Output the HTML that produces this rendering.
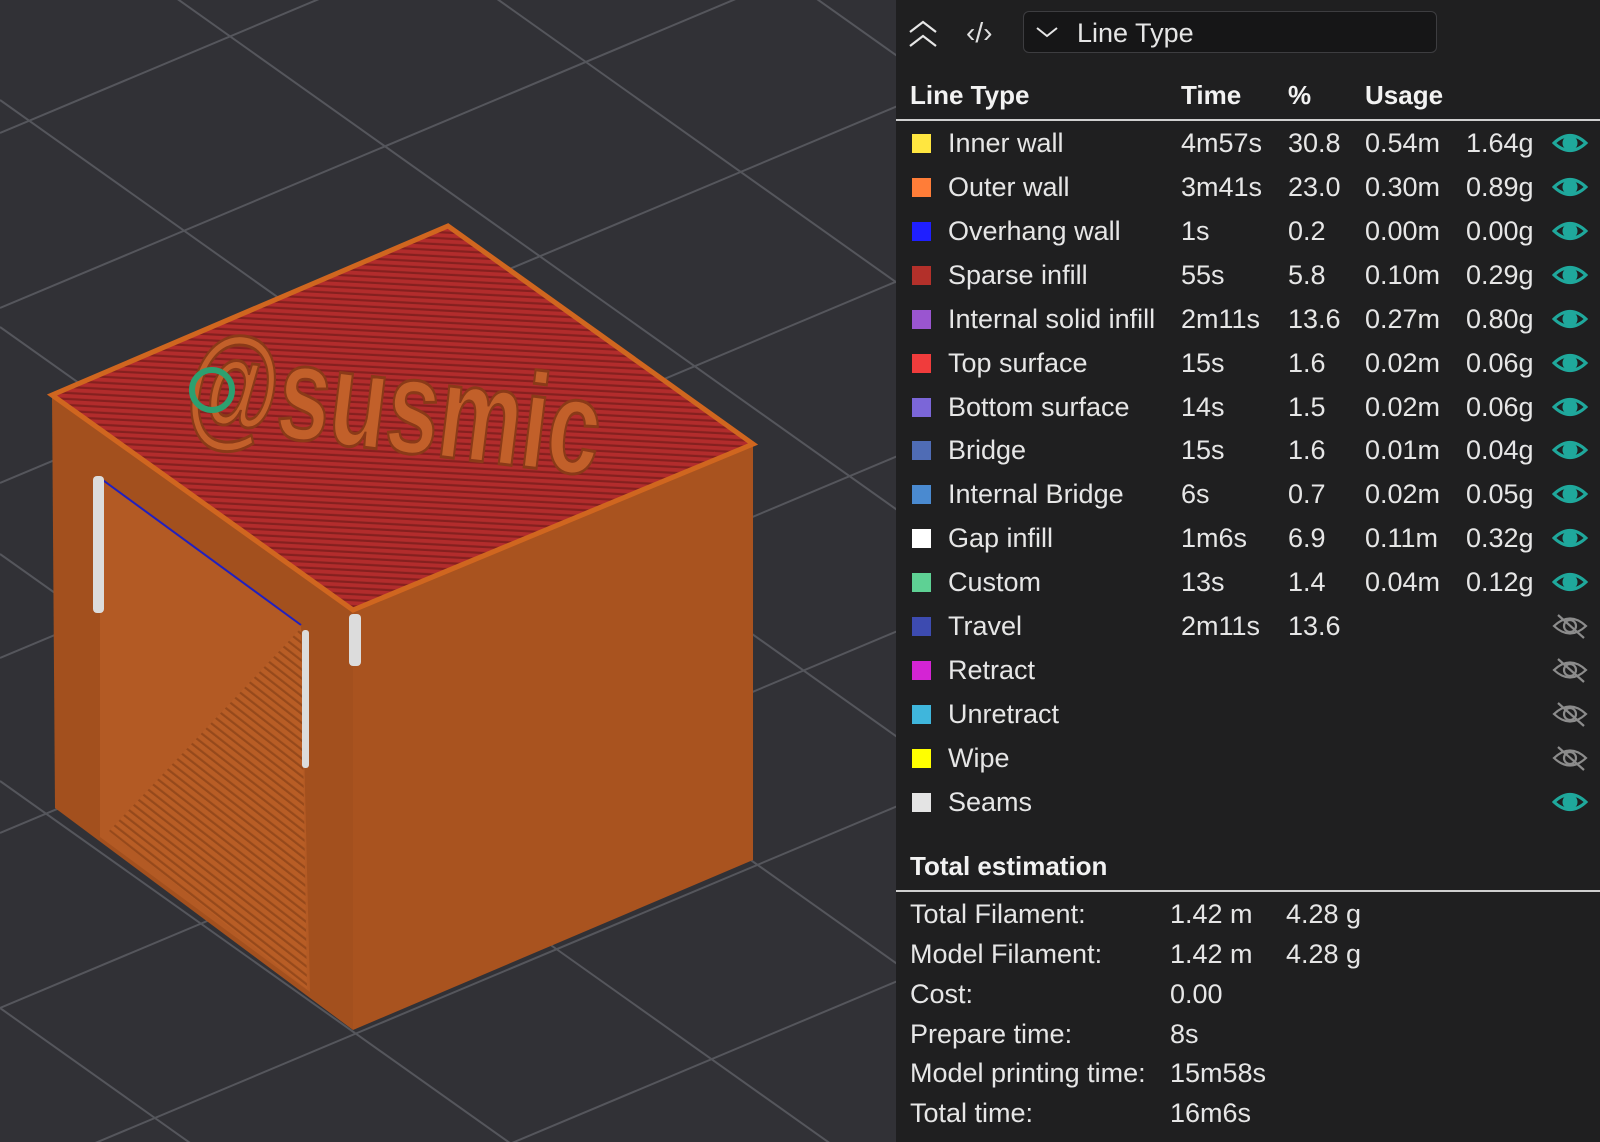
<!DOCTYPE html>
<html style="overflow:hidden"><head><meta charset="utf-8">
<style>
*{margin:0;padding:0;box-sizing:border-box}
html,body{width:1600px;height:1142px;overflow:hidden}
body{background:#313136;font-family:"Liberation Sans",sans-serif;position:relative}
#vp{position:absolute;left:0;top:0}
#panel{position:absolute;left:896px;top:0;width:704px;height:1142px;background:#1f1f20;color:#e6e6e6;overflow:hidden}
.t{position:absolute;font-size:27px;line-height:44px;white-space:nowrap}
.h{position:absolute;font-size:26px;font-weight:bold;line-height:44px;white-space:nowrap;color:#f2f2f2}
.sw{position:absolute;width:19px;height:19px}
</style></head><body>
<svg id="vp" width="896" height="1142" viewBox="0 0 896 1142">
<defs>
<pattern id="redstripe" width="8" height="6" patternUnits="userSpaceOnUse" patternTransform="rotate(3)">
<rect width="8" height="6" fill="#b22c2c"/><rect y="3.8" width="8" height="2.2" fill="#85201f"/></pattern>
<pattern id="orstripe" width="8" height="7" patternUnits="userSpaceOnUse" patternTransform="rotate(38)">
<rect width="8" height="7" fill="#b85d25"/><rect y="4.8" width="8" height="2.2" fill="#96491b"/></pattern>
</defs>
<rect width="896" height="1142" fill="#313136"/>
<g stroke="#55565c" stroke-width="2">
<line x1="0" y1="-808" x2="1200" y2="44"/>
<line x1="0" y1="-581" x2="1200" y2="271"/>
<line x1="0" y1="-354" x2="1200" y2="498"/>
<line x1="0" y1="-127" x2="1200" y2="725"/>
<line x1="0" y1="100" x2="1200" y2="952"/>
<line x1="0" y1="327" x2="1200" y2="1179"/>
<line x1="0" y1="554" x2="1200" y2="1406"/>
<line x1="0" y1="781" x2="1200" y2="1633"/>
<line x1="0" y1="1008" x2="1200" y2="1860"/>
<line x1="0" y1="133" x2="1200" y2="-371"/>
<line x1="0" y1="308" x2="1200" y2="-196"/>
<line x1="0" y1="483" x2="1200" y2="-21"/>
<line x1="0" y1="658" x2="1200" y2="154"/>
<line x1="0" y1="833" x2="1200" y2="329"/>
<line x1="0" y1="1008" x2="1200" y2="504"/>
<line x1="0" y1="1183" x2="1200" y2="679"/>
<line x1="0" y1="1358" x2="1200" y2="854"/>
<line x1="0" y1="1533" x2="1200" y2="1029"/>
</g>
<polygon points="353,610 753,444 753,860 353,1030" fill="#a9531f"/>
<polygon points="52,395 353,610 353,1030 55,808" fill="#a3501e"/>
<polygon points="100,478 301,625 310,992 100,837" fill="#b35a24"/>
<polygon points="109,831 301,628 307,989" fill="url(#orstripe)"/>
<line x1="100" y1="478" x2="301" y2="625" stroke="#2020c0" stroke-width="2"/>
<polygon points="448,226 753,444 353,610 52,395" fill="url(#redstripe)" stroke="#d0661f" stroke-width="5"/>
<g transform="translate(183,425) rotate(7)">
<text x="0" y="0" font-family="Liberation Sans, sans-serif" font-weight="bold" font-size="135" textLength="415" lengthAdjust="spacingAndGlyphs" fill="#c2602a" stroke="#8a3a18" stroke-width="3">@susmic</text>
</g>
<circle cx="212" cy="390" r="20" fill="none" stroke="#2da070" stroke-width="6"/>
<rect x="93" y="476" width="11" height="137" rx="4" fill="#dcdcdc"/>
<rect x="302" y="630" width="7" height="138" rx="3" fill="#dcdcdc"/>
<rect x="349" y="614" width="12" height="52" rx="4" fill="#dcdcdc"/>
</svg>

<div id="panel">
<svg style="position:absolute;left:12px;top:19px" width="30" height="30" viewBox="0 0 30 30" fill="none" stroke="#e6e6e6" stroke-width="2.2"><path d="M2 13 L15 3 L28 13"/><path d="M2 27 L15 17 L28 27"/></svg>
<div class="t" style="left:70px;top:11px;font-size:28px;color:#e0e0e0">‹/›</div>
<div style="position:absolute;left:127px;top:11px;width:414px;height:42px;border:1.5px solid #3d3d40;border-radius:6px;background:#161617"></div>
<svg style="position:absolute;left:140px;top:26px" width="22" height="12" viewBox="0 0 22 12" fill="none" stroke="#e6e6e6" stroke-width="2"><path d="M1 2 L11 10 L21 2"/></svg>
<div class="t" style="left:181px;top:11px">Line Type</div>
<div class="h" style="left:14px;top:73px">Line Type</div>
<div class="h" style="left:285px;top:73px">Time</div>
<div class="h" style="left:392px;top:73px">%</div>
<div class="h" style="left:469px;top:73px">Usage</div>
<div style="position:absolute;left:0;top:119px;width:704px;height:2px;background:#cfcfcf"></div>

<div class="h" style="left:14px;top:844px">Total estimation</div>
<div style="position:absolute;left:0;top:890px;width:704px;height:2px;background:#cfcfcf"></div>
<div class="t" style="left:14px;top:892px">Total Filament:</div><div class="t" style="left:274px;top:892px">1.42 m</div><div class="t" style="left:390px;top:892px">4.28 g</div>
<div class="t" style="left:14px;top:932px">Model Filament:</div><div class="t" style="left:274px;top:932px">1.42 m</div><div class="t" style="left:390px;top:932px">4.28 g</div>
<div class="t" style="left:14px;top:972px">Cost:</div><div class="t" style="left:274px;top:972px">0.00</div>
<div class="t" style="left:14px;top:1012px">Prepare time:</div><div class="t" style="left:274px;top:1012px">8s</div>
<div class="t" style="left:14px;top:1051px">Model printing time:</div><div class="t" style="left:274px;top:1051px">15m58s</div>
<div class="t" style="left:14px;top:1091px;line-height:44px">Total time:</div><div class="t" style="left:274px;top:1091px">16m6s</div>

<div class="sw" style="left:16px;top:134px;background:#ffe640"></div><div class="t" style="left:52px;top:121px">Inner wall</div><div class="t" style="left:285px;top:121px">4m57s</div><div class="t" style="left:392px;top:121px">30.8</div><div class="t" style="left:469px;top:121px">0.54m</div><div class="t" style="left:570px;top:121px">1.64g</div>
<div class="sw" style="left:16px;top:178px;background:#ff7d38"></div><div class="t" style="left:52px;top:165px">Outer wall</div><div class="t" style="left:285px;top:165px">3m41s</div><div class="t" style="left:392px;top:165px">23.0</div><div class="t" style="left:469px;top:165px">0.30m</div><div class="t" style="left:570px;top:165px">0.89g</div>
<div class="sw" style="left:16px;top:222px;background:#1f1fff"></div><div class="t" style="left:52px;top:209px">Overhang wall</div><div class="t" style="left:285px;top:209px">1s</div><div class="t" style="left:392px;top:209px">0.2</div><div class="t" style="left:469px;top:209px">0.00m</div><div class="t" style="left:570px;top:209px">0.00g</div>
<div class="sw" style="left:16px;top:266px;background:#b3302a"></div><div class="t" style="left:52px;top:253px">Sparse infill</div><div class="t" style="left:285px;top:253px">55s</div><div class="t" style="left:392px;top:253px">5.8</div><div class="t" style="left:469px;top:253px">0.10m</div><div class="t" style="left:570px;top:253px">0.29g</div>
<div class="sw" style="left:16px;top:310px;background:#9a55d0"></div><div class="t" style="left:52px;top:297px">Internal solid infill</div><div class="t" style="left:285px;top:297px">2m11s</div><div class="t" style="left:392px;top:297px">13.6</div><div class="t" style="left:469px;top:297px">0.27m</div><div class="t" style="left:570px;top:297px">0.80g</div>
<div class="sw" style="left:16px;top:354px;background:#f03c3c"></div><div class="t" style="left:52px;top:341px">Top surface</div><div class="t" style="left:285px;top:341px">15s</div><div class="t" style="left:392px;top:341px">1.6</div><div class="t" style="left:469px;top:341px">0.02m</div><div class="t" style="left:570px;top:341px">0.06g</div>
<div class="sw" style="left:16px;top:398px;background:#7b66d8"></div><div class="t" style="left:52px;top:385px">Bottom surface</div><div class="t" style="left:285px;top:385px">14s</div><div class="t" style="left:392px;top:385px">1.5</div><div class="t" style="left:469px;top:385px">0.02m</div><div class="t" style="left:570px;top:385px">0.06g</div>
<div class="sw" style="left:16px;top:441px;background:#4f6cb5"></div><div class="t" style="left:52px;top:428px">Bridge</div><div class="t" style="left:285px;top:428px">15s</div><div class="t" style="left:392px;top:428px">1.6</div><div class="t" style="left:469px;top:428px">0.01m</div><div class="t" style="left:570px;top:428px">0.04g</div>
<div class="sw" style="left:16px;top:485px;background:#4a8ad0"></div><div class="t" style="left:52px;top:472px">Internal Bridge</div><div class="t" style="left:285px;top:472px">6s</div><div class="t" style="left:392px;top:472px">0.7</div><div class="t" style="left:469px;top:472px">0.02m</div><div class="t" style="left:570px;top:472px">0.05g</div>
<div class="sw" style="left:16px;top:529px;background:#ffffff"></div><div class="t" style="left:52px;top:516px">Gap infill</div><div class="t" style="left:285px;top:516px">1m6s</div><div class="t" style="left:392px;top:516px">6.9</div><div class="t" style="left:469px;top:516px">0.11m</div><div class="t" style="left:570px;top:516px">0.32g</div>
<div class="sw" style="left:16px;top:573px;background:#5ed194"></div><div class="t" style="left:52px;top:560px">Custom</div><div class="t" style="left:285px;top:560px">13s</div><div class="t" style="left:392px;top:560px">1.4</div><div class="t" style="left:469px;top:560px">0.04m</div><div class="t" style="left:570px;top:560px">0.12g</div>
<div class="sw" style="left:16px;top:617px;background:#3d4bb0"></div><div class="t" style="left:52px;top:604px">Travel</div><div class="t" style="left:285px;top:604px">2m11s</div><div class="t" style="left:392px;top:604px">13.6</div>
<div class="sw" style="left:16px;top:661px;background:#d424d4"></div><div class="t" style="left:52px;top:648px">Retract</div>
<div class="sw" style="left:16px;top:705px;background:#3fb6dc"></div><div class="t" style="left:52px;top:692px">Unretract</div>
<div class="sw" style="left:16px;top:749px;background:#ffff00"></div><div class="t" style="left:52px;top:736px">Wipe</div>
<div class="sw" style="left:16px;top:793px;background:#e4e4e4"></div><div class="t" style="left:52px;top:780px">Seams</div>

<svg style="position:absolute;left:656px;top:0" width="40" height="820" viewBox="0 0 40 820">
<defs>
<g id="eo"><path d="M2 12 Q18 -3 34 12 Q18 27 2 12Z" fill="none" stroke="#1fa89c" stroke-width="3"/><circle cx="18" cy="12" r="7.5" fill="#1fa89c"/></g>
<g id="ec" fill="none" stroke="#8c8c8c" stroke-width="2.2"><path d="M2 12 Q18 -3 34 12 Q18 27 2 12Z"/><circle cx="18" cy="12" r="6"/><line x1="6" y1="1" x2="32" y2="24"/></g>
</defs>
<use href="#eo" x="0" y="131"/><use href="#eo" x="0" y="175"/><use href="#eo" x="0" y="219"/><use href="#eo" x="0" y="263"/><use href="#eo" x="0" y="307"/><use href="#eo" x="0" y="351"/><use href="#eo" x="0" y="395"/><use href="#eo" x="0" y="438"/><use href="#eo" x="0" y="482"/><use href="#eo" x="0" y="526"/><use href="#eo" x="0" y="570"/>
<use href="#ec" x="0" y="614"/><use href="#ec" x="0" y="658"/><use href="#ec" x="0" y="702"/><use href="#ec" x="0" y="746"/>
<use href="#eo" x="0" y="790"/>
</svg>
</div>
</body></html>
